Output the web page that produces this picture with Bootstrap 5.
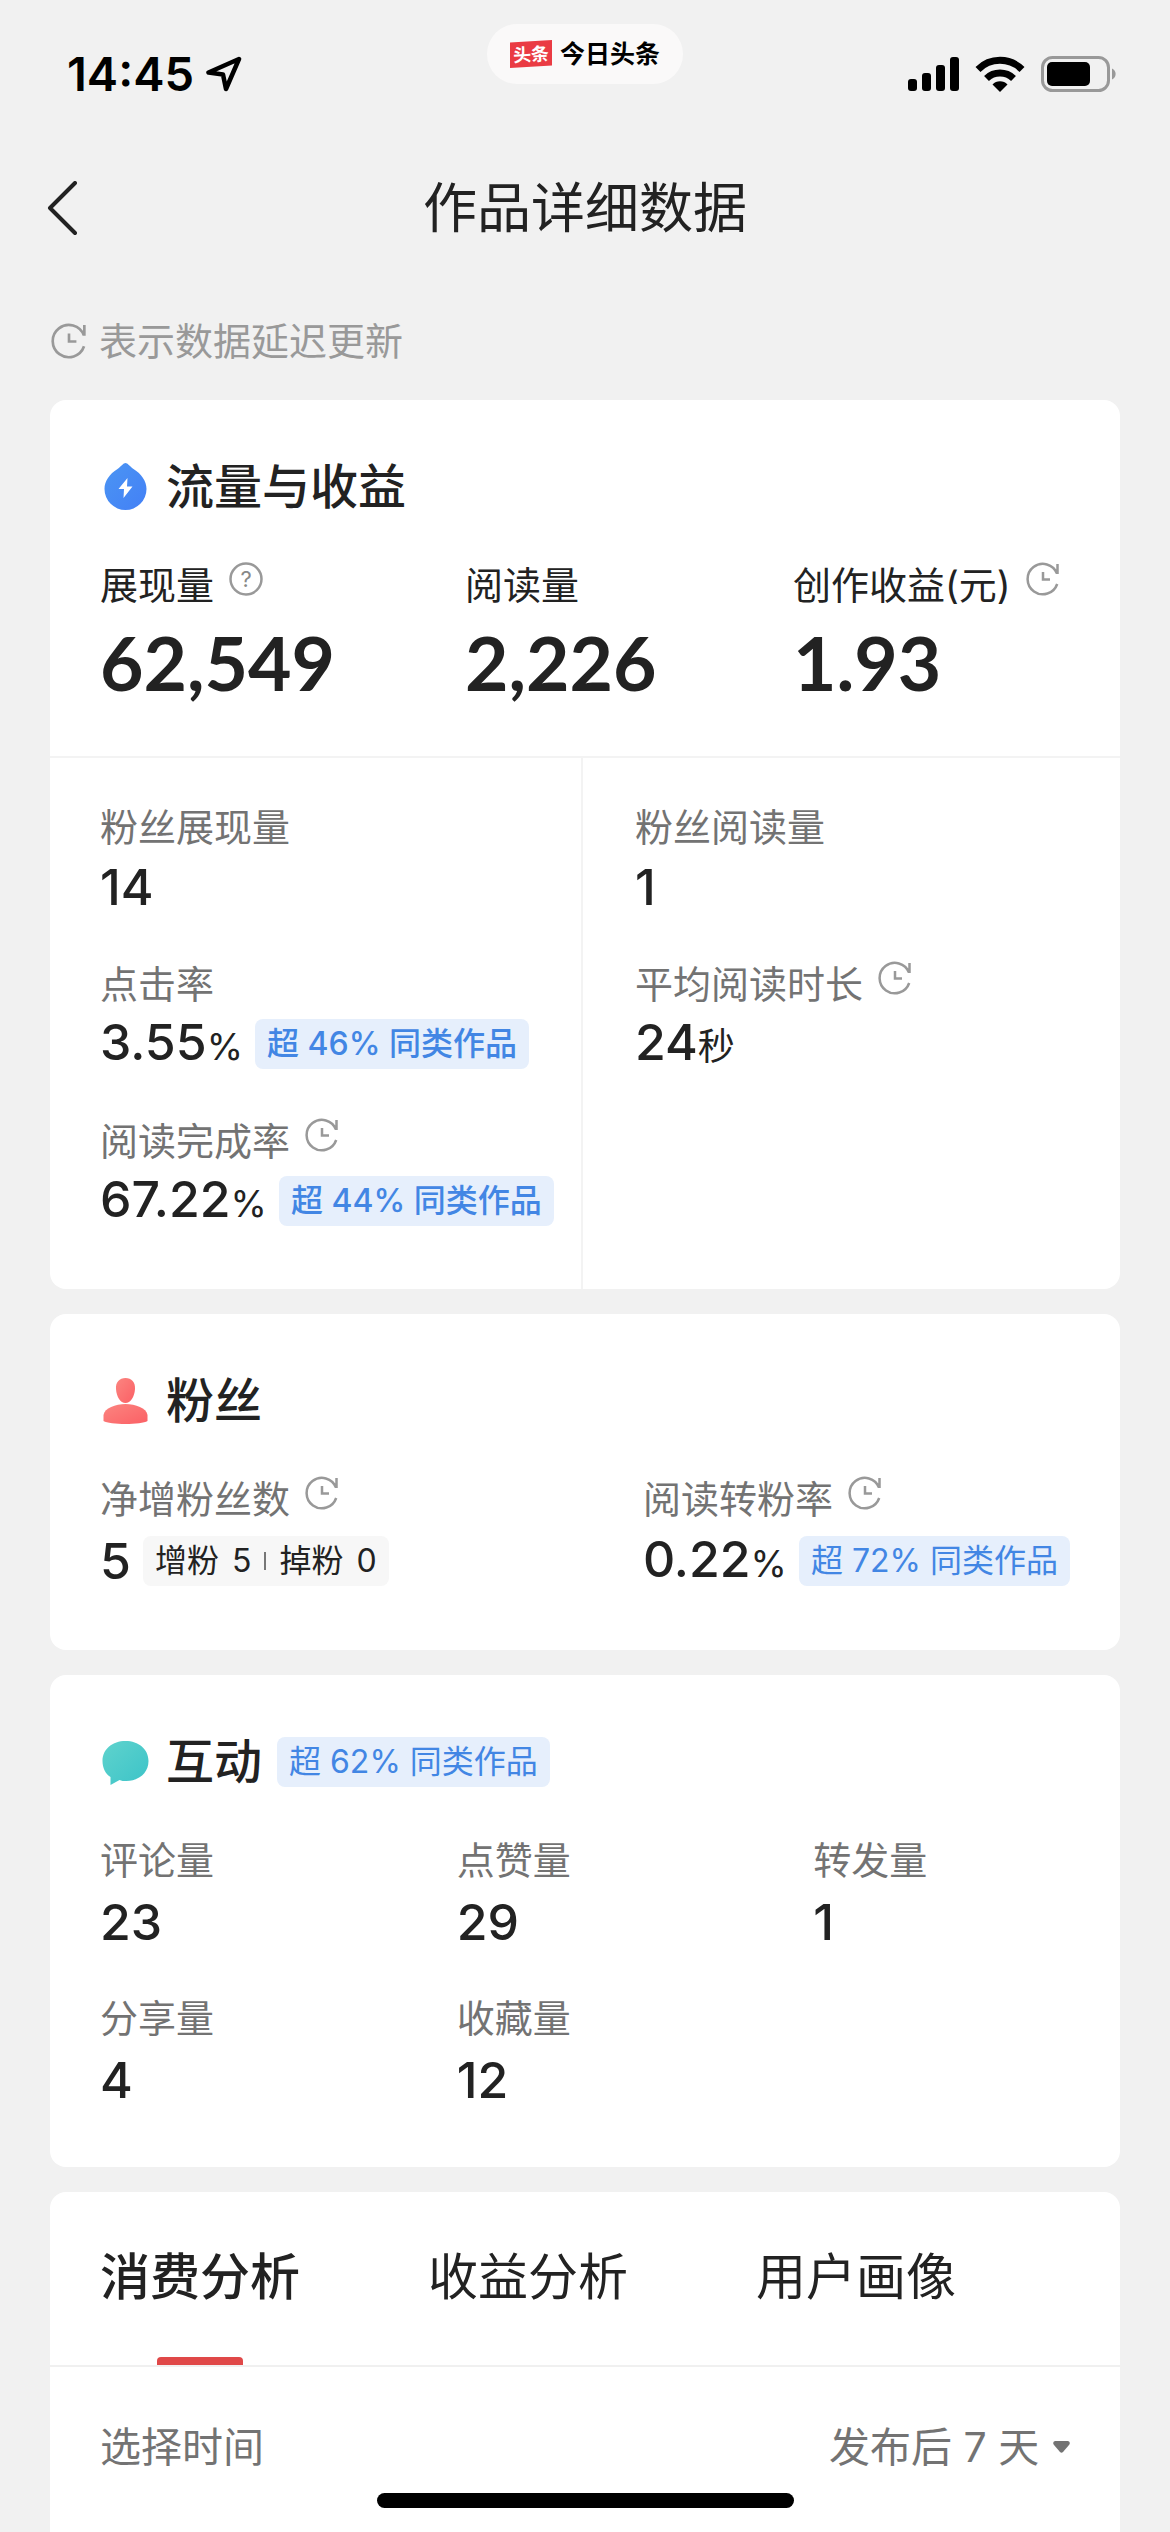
<!DOCTYPE html>
<html lang="zh-CN">
<head>
<meta charset="utf-8">
<meta name="viewport" content="width=device-width, initial-scale=1">
<title>作品详细数据</title>
<link href="https://cdn.jsdelivr.net/npm/bootstrap@5.3.0/dist/css/bootstrap.min.css" rel="stylesheet">
<style>
body{background:#f1f1f1;color:#222;font-family:Inter,"Noto Sans CJK SC",sans-serif;font-size:38px;line-height:54px}
svg{display:block;flex:none}
.status-bar{display:grid;grid-template-columns:1fr auto 1fr;align-items:start;height:104px;padding:24px 53px 0;color:#000}
.status-side{display:flex;align-items:center;height:60px;margin-top:20px}
.clock-time{font-size:47px;font-weight:600;line-height:60px;margin:0 12px 0 14px}
.app-pill{height:60px;border-radius:30px;background:#faf9f9;padding:0 23px;font-size:25px;font-weight:700;line-height:60px}
.title-bar{display:grid;grid-template-columns:1fr auto 1fr;align-items:center;height:210px;padding:0 46px}
.title-bar h1{font-size:54px;font-weight:400;line-height:80px;margin:0}
.back-btn{border:0;background:none;padding:0;justify-self:start}
.delay-note{color:#999;padding:0 51px;margin-bottom:32px;gap:12px}
.panels{margin:0 50px;gap:25px}
.panel{background:#fff;border-radius:16px}
.panel-body{padding:51px 50px 56px}
.panel-body.hero-wrap{padding-bottom:53px}
.panel-head{height:72px;margin-bottom:35px;gap:15px}
.panel-head h2{font-size:48px;font-weight:500;line-height:72px;margin:0}
.stat-label{display:flex;align-items:flex-start;gap:15px;color:#737373;white-space:nowrap}
.stat-label svg{margin-top:4px}
.stat-value{display:flex;align-items:center;height:68px;padding-top:2px;white-space:nowrap}
.split .stat-value{height:66px;padding-top:0}
.num{font-size:50px;font-weight:500;line-height:66px}
.num small{font-size:37px;font-weight:400}
.tag{border-radius:8px;height:50px;line-height:50px;padding:0 12px;font-size:32px;margin-left:12px;background:#e6effc;color:#4286e4;display:flex;align-items:center}
.split .tag{font-weight:500}
.tag-plain{background:#f7f7f7;color:#222;gap:13px}
.tag-plain i{width:2px;height:18px;background:#777}
.hero{display:grid;grid-template-columns:365fr 328fr 277fr}
.hero .stat-label{color:#222}
.hero-num{font-family:Lato,sans-serif;font-size:75px;font-weight:700;line-height:78px;margin-top:11px;margin-bottom:2px}
.split{display:grid;grid-template-columns:531fr 539fr;border-top:2px solid #f3f3f3}
.split>div{padding:42px 0 55px 50px}
.split>div+div{border-left:2px solid #f3f3f3;padding-left:52px}
.stack{display:flex;flex-direction:column;gap:37px}
.inter{padding:51px 0 54px}
.inter .panel-head{padding-left:50px}
.tri{row-gap:36px}
.tri>div{padding-left:50px}
.last-panel{border-radius:16px 16px 0 0}
.tab-row{gap:128px;padding:0 50px;border-bottom:2px solid #f0f0f0}
.tab-row button{border:0;background:none;padding:52px 0 55px;font-size:50px;line-height:66px;color:#222;position:relative}
.tab-row .active{font-weight:500}
.tab-row .active::after{content:"";position:absolute;bottom:0;left:57px;right:57px;height:8px;border-radius:4px 4px 0 0;background:#e04848}
.time-row{padding:49px 50px;font-size:41px;line-height:62px;color:#737373}
.time-row select{appearance:none;border:0;background:none;padding:0;color:inherit;font:inherit;height:62px}
.time-pick{gap:13px}
.home-bar{position:fixed;left:50%;bottom:24px;width:417px;height:15px;margin-left:-208px;border-radius:8px;background:#000}
</style>
</head>
<body class="d-flex flex-column min-vh-100">
<svg width="0" height="0" class="position-absolute" aria-hidden="true">
  <symbol id="delay" viewBox="0 0 34 34"><path d="M31.5 2v10M31 11.6A15.2 15.2 0 1 0 31.2 22M17 10v7.5h7" fill="none" stroke="#999" stroke-width="2.5"/></symbol>
</svg>

<header>
  <div class="status-bar">
    <div class="status-side">
      <span class="clock-time">14:45</span>
      <svg width="36" height="36" viewBox="0 0 36 36" fill="none" stroke="#000" stroke-width="4.5" stroke-linejoin="round"><path d="M33 3 2.500 16.500 17 18.500 20 33Z"/></svg>
    </div>
    <div class="app-pill d-flex align-items-center gap-2">
      <svg width="42" height="28" viewBox="0 0 42 28"><path d="M0 2.500 42 0v25.500L0 28Z" fill="#ea3b43"/><text x="21" y="21" text-anchor="middle" font-size="18" font-weight="700" fill="#fff" transform="rotate(-3 21 14)">头条</text></svg>
      <span>今日头条</span>
    </div>
    <div class="status-side justify-content-end">
      <svg width="51" height="34" viewBox="0 0 51 34"><rect y="22" width="9" height="12" rx="3"/><rect x="14" y="16" width="9" height="18" rx="3"/><rect x="28" y="8" width="9" height="26" rx="3"/><rect x="42" width="9" height="34" rx="3"/></svg>
      <svg class="ms-3" width="50" height="36" viewBox="0 0 50 36"><path d="M3 13.500a31 31 0 0 1 44 0M11.500 22.500a19.500 19.500 0 0 1 27 0" fill="none" stroke="#000" stroke-width="7"/><path d="M25 36 17.500 28.500a10.500 10.500 0 0 1 15 0Z"/></svg>
      <svg class="ms-3" width="76" height="36" viewBox="0 0 76 36"><rect x="1.500" y="1.500" width="66" height="33" rx="10" fill="none" stroke="#999" stroke-width="3"/><rect x="6" y="6" width="43" height="24" rx="5"/><path d="M71 12.500a6 6 0 0 1 0 11Z" fill="#999"/></svg>
    </div>
  </div>
  <div class="title-bar">
    <button class="back-btn" type="button" aria-label="返回"><svg width="32" height="56" viewBox="0 0 32 56" fill="none" stroke="#222" stroke-width="4" stroke-linecap="round" stroke-linejoin="round"><path d="M29 2 4 27l25 25"/></svg></button>
    <h1>作品详细数据</h1>
  </div>
</header>

<div class="delay-note d-flex align-items-center"><svg width="36" height="36"><use href="#delay"/></svg><span>表示数据延迟更新</span></div>

<main class="panels d-flex flex-column flex-grow-1">
  <section class="panel">
    <div class="panel-body hero-wrap">
      <div class="panel-head d-flex align-items-center">
        <svg width="51" height="50" viewBox="0 0 50 50"><defs><linearGradient id="gb" x1="0" y1="0" x2="1" y2="1"><stop stop-color="#4b95f3"/><stop offset="1" stop-color="#4380f6"/></linearGradient></defs><path d="M25 1c2 0 4 3 8 6 8 5 13 12 13 20a21 21 0 0 1-42 0c0-8 5-15 13-20 4-3 6-6 8-6Z" fill="url(#gb)"/><path d="M27 16 18 27h5.500L23 36l9-11.500h-5.500Z" fill="#fff"/></svg>
        <h2>流量与收益</h2>
      </div>
      <div class="hero">
        <div><div class="stat-label">展现量<svg width="34" height="34" viewBox="0 0 34 34"><circle cx="17" cy="17" r="15.500" fill="none" stroke="#999" stroke-width="2.500"/><text x="17" y="25" text-anchor="middle" font-size="22" fill="#888">?</text></svg></div><div class="hero-num">62,549</div></div>
        <div><div class="stat-label">阅读量</div><div class="hero-num">2,226</div></div>
        <div><div class="stat-label">创作收益(元)<svg width="34" height="34"><use href="#delay"/></svg></div><div class="hero-num">1.93</div></div>
      </div>
    </div>
    <div class="split">
      <div class="stack">
        <div><div class="stat-label">粉丝展现量</div><div class="stat-value"><span class="num">14</span></div></div>
        <div><div class="stat-label">点击率</div><div class="stat-value"><span class="num">3.55<small>%</small></span><span class="tag">超 46% 同类作品</span></div></div>
        <div><div class="stat-label">阅读完成率<svg width="34" height="34"><use href="#delay"/></svg></div><div class="stat-value"><span class="num">67.22<small>%</small></span><span class="tag">超 44% 同类作品</span></div></div>
      </div>
      <div class="stack">
        <div><div class="stat-label">粉丝阅读量</div><div class="stat-value"><span class="num">1</span></div></div>
        <div><div class="stat-label">平均阅读时长<svg width="34" height="34"><use href="#delay"/></svg></div><div class="stat-value"><span class="num">24<small>秒</small></span></div></div>
      </div>
    </div>
  </section>

  <section class="panel panel-body">
    <div class="panel-head d-flex align-items-center">
      <svg width="51" height="50" viewBox="0 0 50 50"><defs><linearGradient id="gr" x1="0" y1="0" x2="1" y2="1"><stop stop-color="#fb8580"/><stop offset="1" stop-color="#fb6065"/></linearGradient></defs><path d="M25 2c6 0 10 4 9.500 11C34 21 30 27 25 27s-9-6-9.500-14C15 6 19 2 25 2Z" fill="url(#gr)"/><path d="M3 39C4 32 15 28 25 28s21 4 22 11v6c-6 4-38 4-44 0Z" fill="url(#gr)"/></svg>
      <h2>粉丝</h2>
    </div>
    <div class="d-flex justify-content-between">
      <div><div class="stat-label">净增粉丝数<svg width="34" height="34"><use href="#delay"/></svg></div><div class="stat-value"><span class="num">5</span><span class="tag tag-plain"><span>增粉</span><span>5</span><i></i><span>掉粉</span><span>0</span></span></div></div>
      <div><div class="stat-label">阅读转粉率<svg width="34" height="34"><use href="#delay"/></svg></div><div class="stat-value"><span class="num">0.22<small>%</small></span><span class="tag">超 72% 同类作品</span></div></div>
    </div>
  </section>

  <section class="panel inter">
    <div class="panel-head d-flex align-items-center">
      <svg width="51" height="50" viewBox="0 0 50 50"><defs><linearGradient id="gt" x1="0" y1="0" x2="1" y2="1"><stop stop-color="#5fd3cd"/><stop offset="1" stop-color="#3cc3c8"/></linearGradient></defs><path d="M25 4c13 0 23 8 23 20S38 44 26 44c-3 0-5 0-7-1L10 48v-8C5 37 2 31 2 24 2 12 12 4 25 4Z" fill="url(#gt)"/></svg>
      <h2>互动</h2><span class="tag m-0">超 62% 同类作品</span>
    </div>
    <div class="row g-0 tri">
      <div class="col-4"><div class="stat-label">评论量</div><div class="stat-value"><span class="num">23</span></div></div>
      <div class="col-4"><div class="stat-label">点赞量</div><div class="stat-value"><span class="num">29</span></div></div>
      <div class="col-4"><div class="stat-label">转发量</div><div class="stat-value"><span class="num">1</span></div></div>
      <div class="col-4"><div class="stat-label">分享量</div><div class="stat-value"><span class="num">4</span></div></div>
      <div class="col-4"><div class="stat-label">收藏量</div><div class="stat-value"><span class="num">12</span></div></div>
    </div>
  </section>

  <section class="panel last-panel flex-grow-1">
    <div class="tab-row d-flex" role="tablist">
      <button type="button" role="tab" aria-selected="true" class="active">消费分析</button>
      <button type="button" role="tab" aria-selected="false">收益分析</button>
      <button type="button" role="tab" aria-selected="false">用户画像</button>
    </div>
    <div class="time-row d-flex justify-content-between">
      <label for="range">选择时间</label>
      <div class="time-pick d-flex align-items-center">
        <select id="range"><option>发布后 7 天</option></select>
        <svg width="17" height="12" viewBox="0 0 17 12"><path d="M2 0h13q3 1 1 4l-6 7q-1.500 1.500-3 0L1 4Q-1 1 2 0Z" fill="#737373"/></svg>
      </div>
    </div>
  </section>
</main>
<div class="home-bar"></div>
<script src="https://cdn.jsdelivr.net/npm/bootstrap@5.3.0/dist/js/bootstrap.bundle.min.js"></script>
</body>
</html>
